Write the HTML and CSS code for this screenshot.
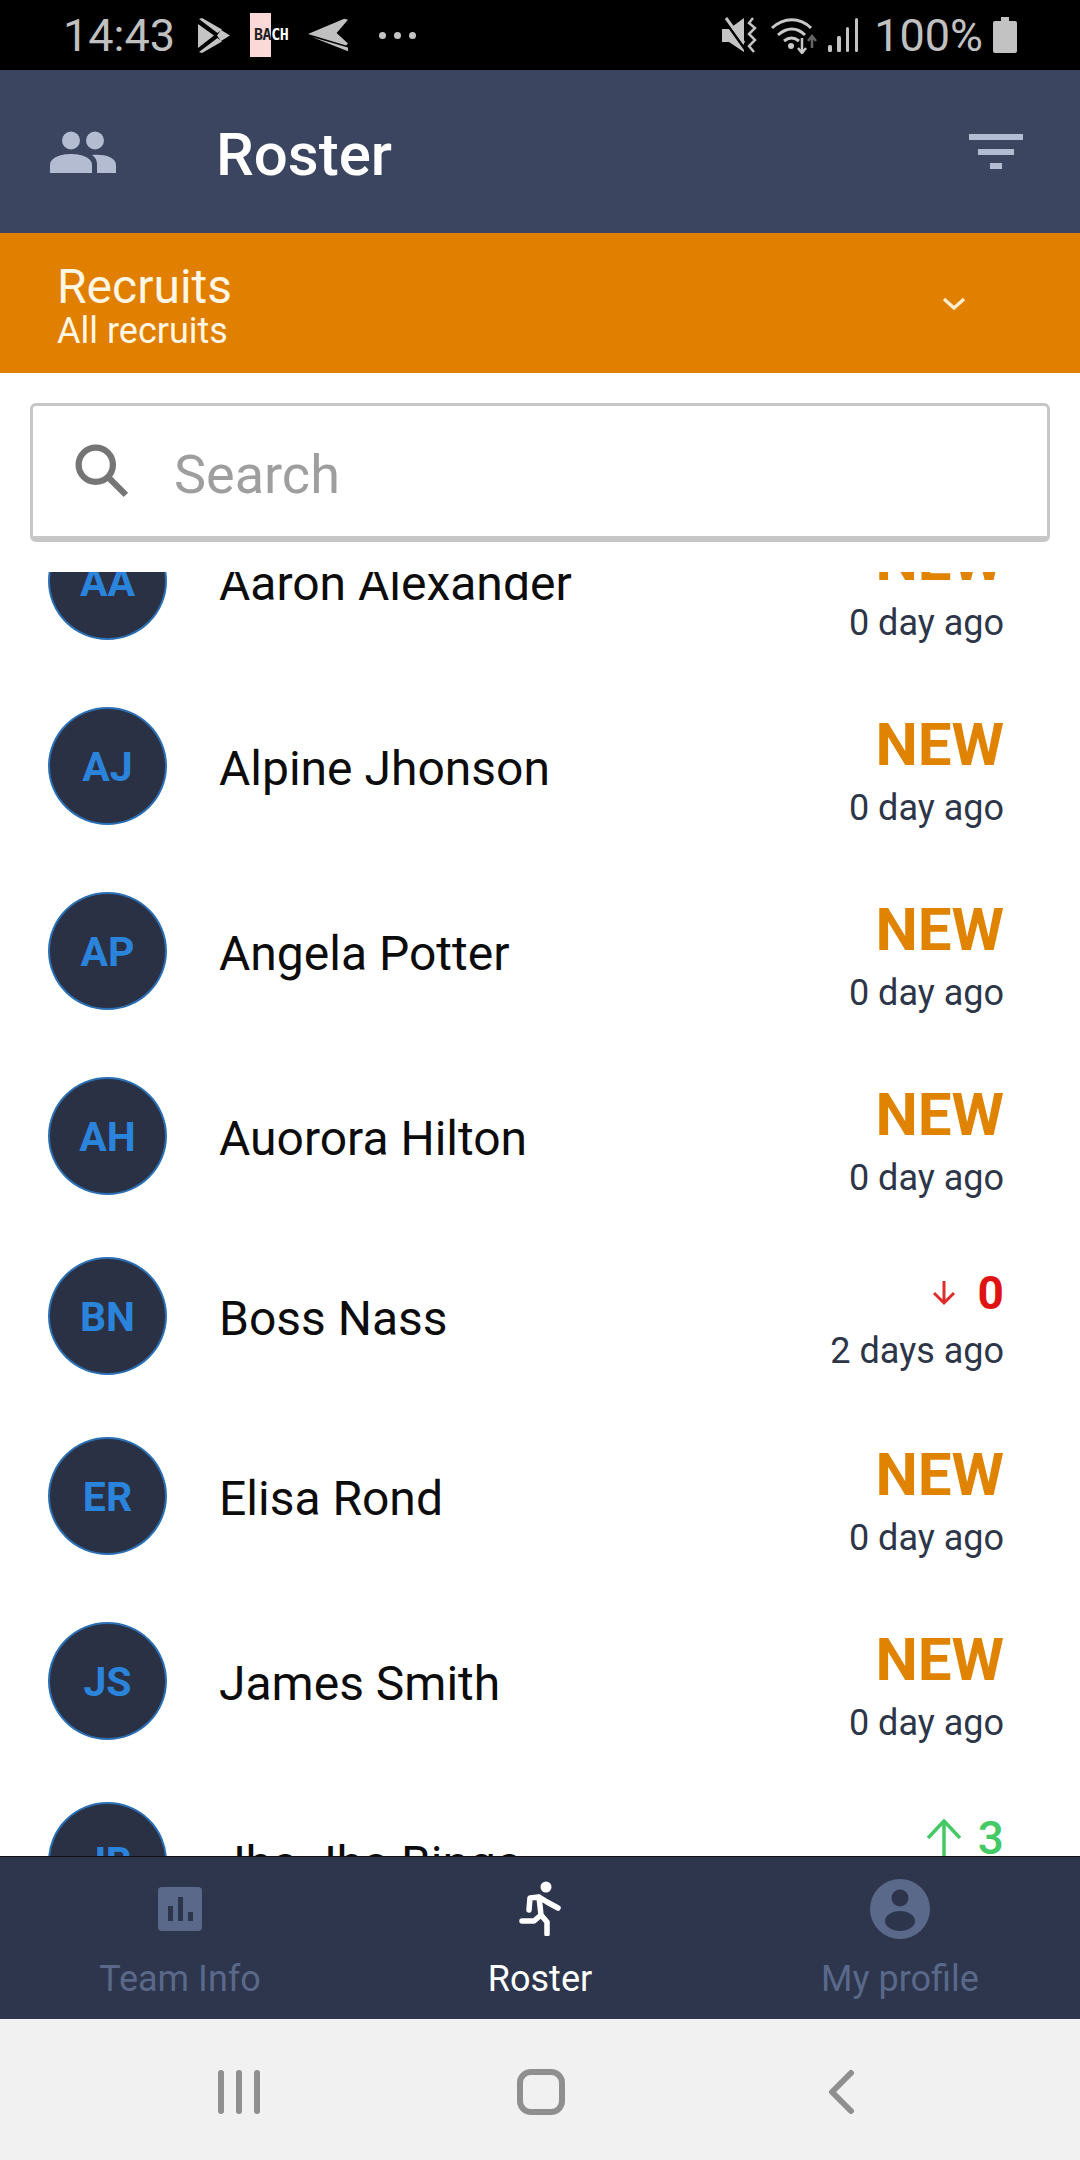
FILE: index.html
```html
<!DOCTYPE html>
<html lang="en">
<head>
<meta charset="utf-8">
<title>Roster</title>
<link rel="stylesheet" href="styles.css">
</head>
<body>
<div class="phone">
  <div class="status">
    <div class="status-left">
      <span class="clock">14:43</span>
      <svg class="i-play" viewBox="0 0 32 35"><path d="M0 6 16 17.500 0 30Z M1 1 4 0 24 11.500 19.500 15Z M1 34 4 35 24 23.500 19.500 20Z M23 12 32 17.500 23 23 19 17.500Z" fill="#c4c4c4"/></svg>
      <span class="bach"><span class="bach-pink">BA</span>CH</span>
      <svg class="i-plane" viewBox="0 0 42 34"><path d="M0 16 38 0 42 1 30 15 42 26 40 28Z" fill="#c0c0c0"/><path d="M4 19 42 30 42 34Z" fill="#c0c0c0"/></svg>
      <span class="dots"><i></i><i></i><i></i></span>
    </div>
    <div class="status-right">
      <svg class="i-mute" viewBox="0 0 36 36"><path d="M0 12H7L22 1V35L7 25H0Z" fill="#c4c4c4"/><path d="M3 4 23 32" stroke="#000" stroke-width="3"/><path d="M4 1 22 26" stroke="#c4c4c4" stroke-width="3"/><path d="M31 1 27 6 33 11 27 17 33 23 27 29 32 35" fill="none" stroke="#c4c4c4" stroke-width="2.500"/></svg>
      <svg class="i-wifi" viewBox="0 0 48 38"><path d="M2 12C14 1 30 1 41 12M8 19C17 11 27 11 35 19M14 25C19 21 24 21 29 25" fill="none" stroke="#c8c8c8" stroke-width="3"/><circle cx="21" cy="30" r="3" fill="#c8c8c8"/><path d="M32 22V36M28 32 32 37 36 32" fill="none" stroke="#c8c8c8" stroke-width="2.500"/><path d="M42 32V21M38 25 42 20 46 25" fill="none" stroke="#666" stroke-width="2.500"/></svg>
      <svg class="i-signal" viewBox="0 0 32 36"><rect x="1" y="28" width="4" height="7" rx="1.500"/><rect x="10" y="19" width="4" height="16" rx="1.500"/><rect x="19" y="10" width="3" height="25" rx="1.500"/><rect x="28" y="1" width="3" height="34" rx="1.500"/></svg>
      <span class="pct">100%</span>
      <svg class="i-batt" viewBox="0 0 24 36"><path d="M8 0H16V4H22Q24 4 24 6V34Q24 36 22 36H2Q0 36 0 34V6Q0 4 2 4H8Z" fill="#c2c2c2"/></svg>
    </div>
  </div>

  <header class="appbar">
    <svg class="i-people" viewBox="0 0 66 42"><circle cx="21" cy="9.500" r="9" fill="#b4bcd2"/><circle cx="45" cy="9.500" r="9" fill="#b4bcd2"/><path d="M0 42V34C0 26 12 23 21 23S42 26 42 34V42Z" fill="#b4bcd2"/><path d="M47 42V33C47 29 45 26 42 24 54 23 66 26 66 34V42Z" fill="#b4bcd2"/></svg>
    <h1 class="title">Roster</h1>
    <svg class="i-filter" viewBox="0 0 54 36"><rect y="0" width="54" height="6" fill="#b4bcd2"/><rect x="9" y="15" width="36" height="6" fill="#b4bcd2"/><rect x="21" y="29" width="12" height="6" fill="#b4bcd2"/></svg>
  </header>

  <div class="group">
    <div class="group-text">
      <div class="group-title">Recruits</div>
      <div class="group-sub">All recruits</div>
    </div>
    <svg class="i-chev" viewBox="0 0 24 15"><path d="M2 3 12 12 22 3" fill="none" stroke="#fdeccd" stroke-width="3.500"/></svg>
  </div>

  <div class="search-wrap">
    <div class="search">
      <svg class="i-search" viewBox="0 0 52 52"><circle cx="20" cy="20" r="16.500" fill="none" stroke="#757575" stroke-width="6"/><path d="M31 31 49 49" stroke="#757575" stroke-width="6"/></svg>
      <span class="search-ph">Search</span>
    </div>
  </div>

  <main class="list">
    <div class="list-inner">
      <div class="row"><div class="avatar">AA</div><div class="name">Aaron Alexander</div><div class="meta"><div class="new">NEW</div><div class="ago">0 day ago</div></div></div>
      <div class="row"><div class="avatar">AJ</div><div class="name">Alpine Jhonson</div><div class="meta"><div class="new">NEW</div><div class="ago">0 day ago</div></div></div>
      <div class="row"><div class="avatar">AP</div><div class="name">Angela Potter</div><div class="meta"><div class="new">NEW</div><div class="ago">0 day ago</div></div></div>
      <div class="row"><div class="avatar">AH</div><div class="name">Auorora Hilton</div><div class="meta"><div class="new">NEW</div><div class="ago">0 day ago</div></div></div>
      <div class="row row-num"><div class="avatar">BN</div><div class="name">Boss Nass</div><div class="meta"><div class="delta down"><svg class="i-arrow-s" viewBox="0 0 24 26"><path d="M12 1V23M2 13 12 23 22 13" fill="none" stroke="#e02b2b" stroke-width="3"/></svg><span>0</span></div><div class="ago">2 days ago</div></div></div>
      <div class="row"><div class="avatar">ER</div><div class="name">Elisa Rond</div><div class="meta"><div class="new">NEW</div><div class="ago">0 day ago</div></div></div>
      <div class="row"><div class="avatar">JS</div><div class="name">James Smith</div><div class="meta"><div class="new">NEW</div><div class="ago">0 day ago</div></div></div>
      <div class="row row-num"><div class="avatar">JB</div><div class="name">Jha Jha Binga</div><div class="meta"><div class="delta up"><svg class="i-arrow-l" viewBox="0 0 36 38"><path d="M18 37V2M2 19 18 2 34 19" fill="none" stroke="#45c967" stroke-width="3.500"/></svg><span>3</span></div><div class="ago">1 day ago</div></div></div>
    </div>
  </main>

  <nav class="tabs">
    <div class="tab">
      <svg class="tab-icon i-bars" viewBox="0 0 44 44"><rect width="44" height="44" rx="4" fill="#5a6889"/><rect x="10" y="19" width="5" height="15" fill="#2c354b"/><rect x="20" y="10" width="5" height="24" fill="#2c354b"/><rect x="30" y="25" width="5" height="9" fill="#2c354b"/></svg>
      <span class="tab-label">Team Info</span>
    </div>
    <div class="tab tab-on">
      <svg class="tab-icon i-run" viewBox="0 0 44 56"><circle cx="28" cy="7" r="5.500" fill="#fff"/><path d="M21 17 12 18 11 30M21 17 29 22 40 28M21 17 23 35 16 41 4 41M23 35 29 42 29 54" fill="none" stroke="#fff" stroke-width="5.500" stroke-linecap="round" stroke-linejoin="round"/></svg>
      <span class="tab-label">Roster</span>
    </div>
    <div class="tab">
      <svg class="tab-icon i-prof" viewBox="0 0 60 60"><circle cx="30" cy="30" r="30" fill="#5a6889"/><circle cx="30" cy="19" r="8.500" fill="#2c354b"/><ellipse cx="30" cy="42" rx="15" ry="10" fill="#2c354b"/></svg>
      <span class="tab-label">My profile</span>
    </div>
  </nav>

  <div class="sysnav">
    <span class="recents"><i></i><i></i><i></i></span>
    <span class="home"></span>
    <svg class="i-back" viewBox="0 0 28 46"><path d="M24 4 5 23 24 42" fill="none" stroke="#8f8f8f" stroke-width="6" stroke-linecap="round" stroke-linejoin="round"/></svg>
  </div>
</div>
</body>
</html>
```
FILE: styles.css
```css
* { box-sizing: border-box; }
html, body { margin: 0; padding: 0; }
body { font-family: Roboto, "Liberation Sans", sans-serif; background: #fff; }
.phone { width: 1080px; height: 2160px; display: flex; flex-direction: column; overflow: hidden; }

.status { height: 70px; flex: none; background: #000; display: flex; justify-content: space-between; align-items: center; padding: 0 63px 0 63px; color: #c0c0c0; }
.status-left, .status-right { display: flex; align-items: center; }
.clock { font-size: 45px; font-weight: 400; margin-right: 23px; }
.i-play { width: 32px; height: 35px; margin-right: 20px; }
.bach { width: 41px; height: 44px; margin-right: 17px; padding-left: 4px; display: flex; align-items: center; font: 700 15px "DejaVu Sans Mono", monospace; letter-spacing: -0.500px; color: #fff; background: linear-gradient(90deg, #fbd9d9 21px, #000 21px); }
.bach-pink { color: #222; }
.i-plane { width: 40px; height: 34px; margin-right: 31px; }
.dots { display: flex; gap: 8px; }
.dots i { width: 7px; height: 7px; border-radius: 50%; background: #c4c4c4; }
.i-mute { width: 36px; height: 36px; margin-right: 12px; }
.i-wifi { width: 48px; height: 38px; margin-right: 9px; }
.i-signal { width: 32px; height: 36px; margin-right: 15px; fill: #c4c4c4; }
.pct { font-size: 45px; font-weight: 400; margin-right: 10px; }
.i-batt { width: 24px; height: 36px; }

.appbar { height: 163px; flex: none; background: #3b4560; display: flex; align-items: center; padding: 0 57px 0 50px; }
.i-people { width: 66px; height: 42px; margin-right: 100px; }
.title { flex: 1; margin: 6px 0 0; color: #fff; font-size: 60px; font-weight: 500; }
.i-filter { width: 54px; height: 36px; }

.group { height: 140px; flex: none; background: #e07f00; display: flex; align-items: center; justify-content: space-between; padding: 0 114px 0 57px; color: #fff6e3; }
.group-text { margin-top: 5px; }
.group-title { font-size: 48px; line-height: 52px; }
.group-sub { font-size: 36px; line-height: 37px; }
.i-chev { width: 24px; height: 15px; }

.search-wrap { flex: none; padding: 30px 30px 0; height: 199px; background: #fff; }
.search { height: 139px; border: 3px solid #c6c6c6; border-bottom-width: 6px; border-radius: 6px; display: flex; align-items: center; padding: 0 0 0 42px; }
.i-search { width: 54px; height: 54px; margin-right: 45px; }
.search-ph { font-size: 54px; color: #9e9e9e; margin-top: 6px; }

.list { flex: 1; min-height: 0; overflow: hidden; background: #fff; }
.list-inner { margin-top: -84px; }
.row { height: 185px; display: flex; align-items: center; padding: 0 76px 0 48px; }
.row-num { height: 175px; }
.avatar { width: 119px; height: 118px; flex: none; border-radius: 50%; background: #2a3145; border: 2px solid #2b70b4; color: #2b84dc; font-size: 41px; font-weight: 700; padding-top: 2px; display: flex; align-items: center; justify-content: center; }
.name { flex: 1; margin: 6px 0 0 52px; font-size: 48px; color: #0c0c0c; }
.meta { display: flex; flex-direction: column; align-items: flex-end; padding-top: 7px; }
.new { font-size: 60px; font-weight: 700; line-height: 70px; color: #e08300; }
.ago { font-size: 36px; line-height: 40px; color: #2d3548; margin-top: 8px; }
.delta { display: flex; align-items: center; font-size: 46px; font-weight: 700; line-height: 52px; margin-bottom: 4px; }
.down { color: #e01212; }
.up { color: #45c967; font-weight: 500; }
.i-arrow-s { width: 24px; height: 26px; margin-right: 22px; }
.i-arrow-l { width: 36px; height: 38px; margin-right: 16px; }

.tabs { height: 163px; flex: none; background: #2d364c; border-top: 1px solid #111; display: grid; grid-template-columns: 360px 360px 360px; }
.tab { display: flex; flex-direction: column; align-items: center; color: #5a6889; position: relative; height: 162px; }
.tab-on { color: #fff; }
.tab-label { position: absolute; top: 99px; font-size: 36px; line-height: 46px; }
.tab-icon { position: absolute; }
.i-bars { width: 44px; height: 44px; top: 30px; }
.i-run { width: 44px; height: 56px; top: 23px; }
.i-prof { width: 60px; height: 60px; top: 22px; }

.sysnav { height: 141px; flex: none; background: #f1f1f1; display: flex; align-items: center; padding: 5px 0 0 218px; }
.recents { display: flex; gap: 12px; }
.recents i { display: block; width: 6px; height: 44px; border-radius: 3px; background: #8f8f8f; }
.home { width: 48px; height: 46px; margin-left: 257px; border: 6px solid #8f8f8f; border-radius: 14px; }
.i-back { width: 28px; height: 46px; margin-left: 262px; }
```
